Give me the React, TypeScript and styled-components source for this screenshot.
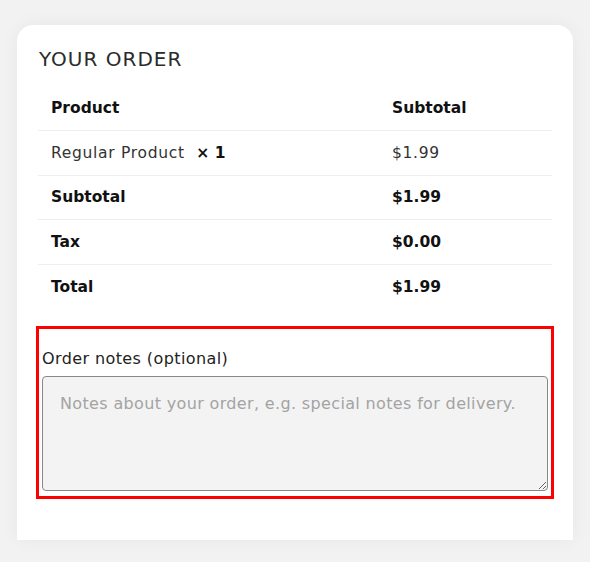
import { createGlobalStyle } from 'styled-components';
import styled from 'styled-components';

const GlobalStyle = createGlobalStyle`
  html, body {
    margin: 0;
    padding: 0;
    background: #f2f2f2;
  }
  body {
    font-family: "DejaVu Sans", "Noto Sans", sans-serif;
    color: #1a1a1a;
  }
`;

const rows = [
    { label: 'Subtotal', value: '$1.99' },
    { label: 'Tax', value: '$0.00' },
    { label: 'Total', value: '$1.99' },
];

const Page = styled.div`
  padding: 25px 17px 0 17px;
  height: 562px;
  box-sizing: border-box;
`;

const Card = styled.div`
  width: 556px;
  height: 515px;
  box-sizing: border-box;
  background: #fff;
  border-radius: 16px 16px 0 0;
  box-shadow: 0 0 18px rgba(0, 0, 0, 0.05);
  padding: 22px 21px 0 21px;
`;

const Title = styled.h3`
  margin: 0 0 0 1px;
  font-size: 20px;
  font-weight: 400;
  line-height: 24px;
  color: #2b2b2b;
  letter-spacing: 1px;
`;

const Table = styled.table`
  width: 100%;
  table-layout: fixed;
  border-collapse: collapse;
  margin-top: 15px;
  font-size: 15.5px;
`;

const Row = styled.tr<{ $last?: boolean }>`
  height: 44.5px;
  border-bottom: ${({ $last }) => ($last ? 'none' : '1px solid #eeeeee')};
`;

const Cell = styled.td<{ $bold?: boolean }>`
  padding: 0 0 0 13px;
  font-weight: ${({ $bold }) => ($bold ? 700 : 400)};
  color: ${({ $bold }) => ($bold ? '#111' : '#333')};
  letter-spacing: ${({ $bold }) => ($bold ? '0' : '0.7px')};
  vertical-align: middle;
  &:first-child {
    width: 328px;
  }
`;

const Qty = styled.strong`
  margin-left: 6px;
  font-weight: 700;
  letter-spacing: 0;
  color: #111;
`;

const NotesBox = styled.div`
  margin: 17px 0 0 -2px;
  width: 518px;
  box-sizing: border-box;
  border: 3px solid #ff0000;
  padding: 20px 3px 5px 3px;
`;

const Label = styled.label`
  display: block;
  font-size: 16px;
  line-height: 20px;
  letter-spacing: 0.4px;
  color: #222;
  margin-bottom: 7px;
`;

const NotesArea = styled.textarea`
  display: block;
  width: 100%;
  height: 115px;
  box-sizing: border-box;
  background: #f3f3f3;
  border: 1px solid #8e8686;
  border-radius: 4px;
  padding: 17px 17px;
  font-family: inherit;
  font-size: 16px;
  letter-spacing: 0.35px;
  color: #333;
  resize: vertical;
  &::placeholder {
    color: #a3a3a3;
  }
`;

export default function App() {
    return (
        <Page>
            <GlobalStyle />
            <Card>
                <Title>YOUR ORDER</Title>
                <Table>
                    <tbody>
                        <Row>
                            <Cell $bold>Product</Cell>
                            <Cell $bold>Subtotal</Cell>
                        </Row>
                        <Row>
                            <Cell>
                                Regular Product <Qty>× 1</Qty>
                            </Cell>
                            <Cell>$1.99</Cell>
                        </Row>
                        {rows.map((r, i) => (
                            <Row key={r.label} $last={i === rows.length - 1}>
                                <Cell $bold>{r.label}</Cell>
                                <Cell $bold>{r.value}</Cell>
                            </Row>
                        ))}
                    </tbody>
                </Table>
                <NotesBox>
                    <Label htmlFor="order-notes">Order notes (optional)</Label>
                    <NotesArea
                        id="order-notes"
                        placeholder="Notes about your order, e.g. special notes for delivery."
                    />
                </NotesBox>
            </Card>
        </Page>
    );
}
